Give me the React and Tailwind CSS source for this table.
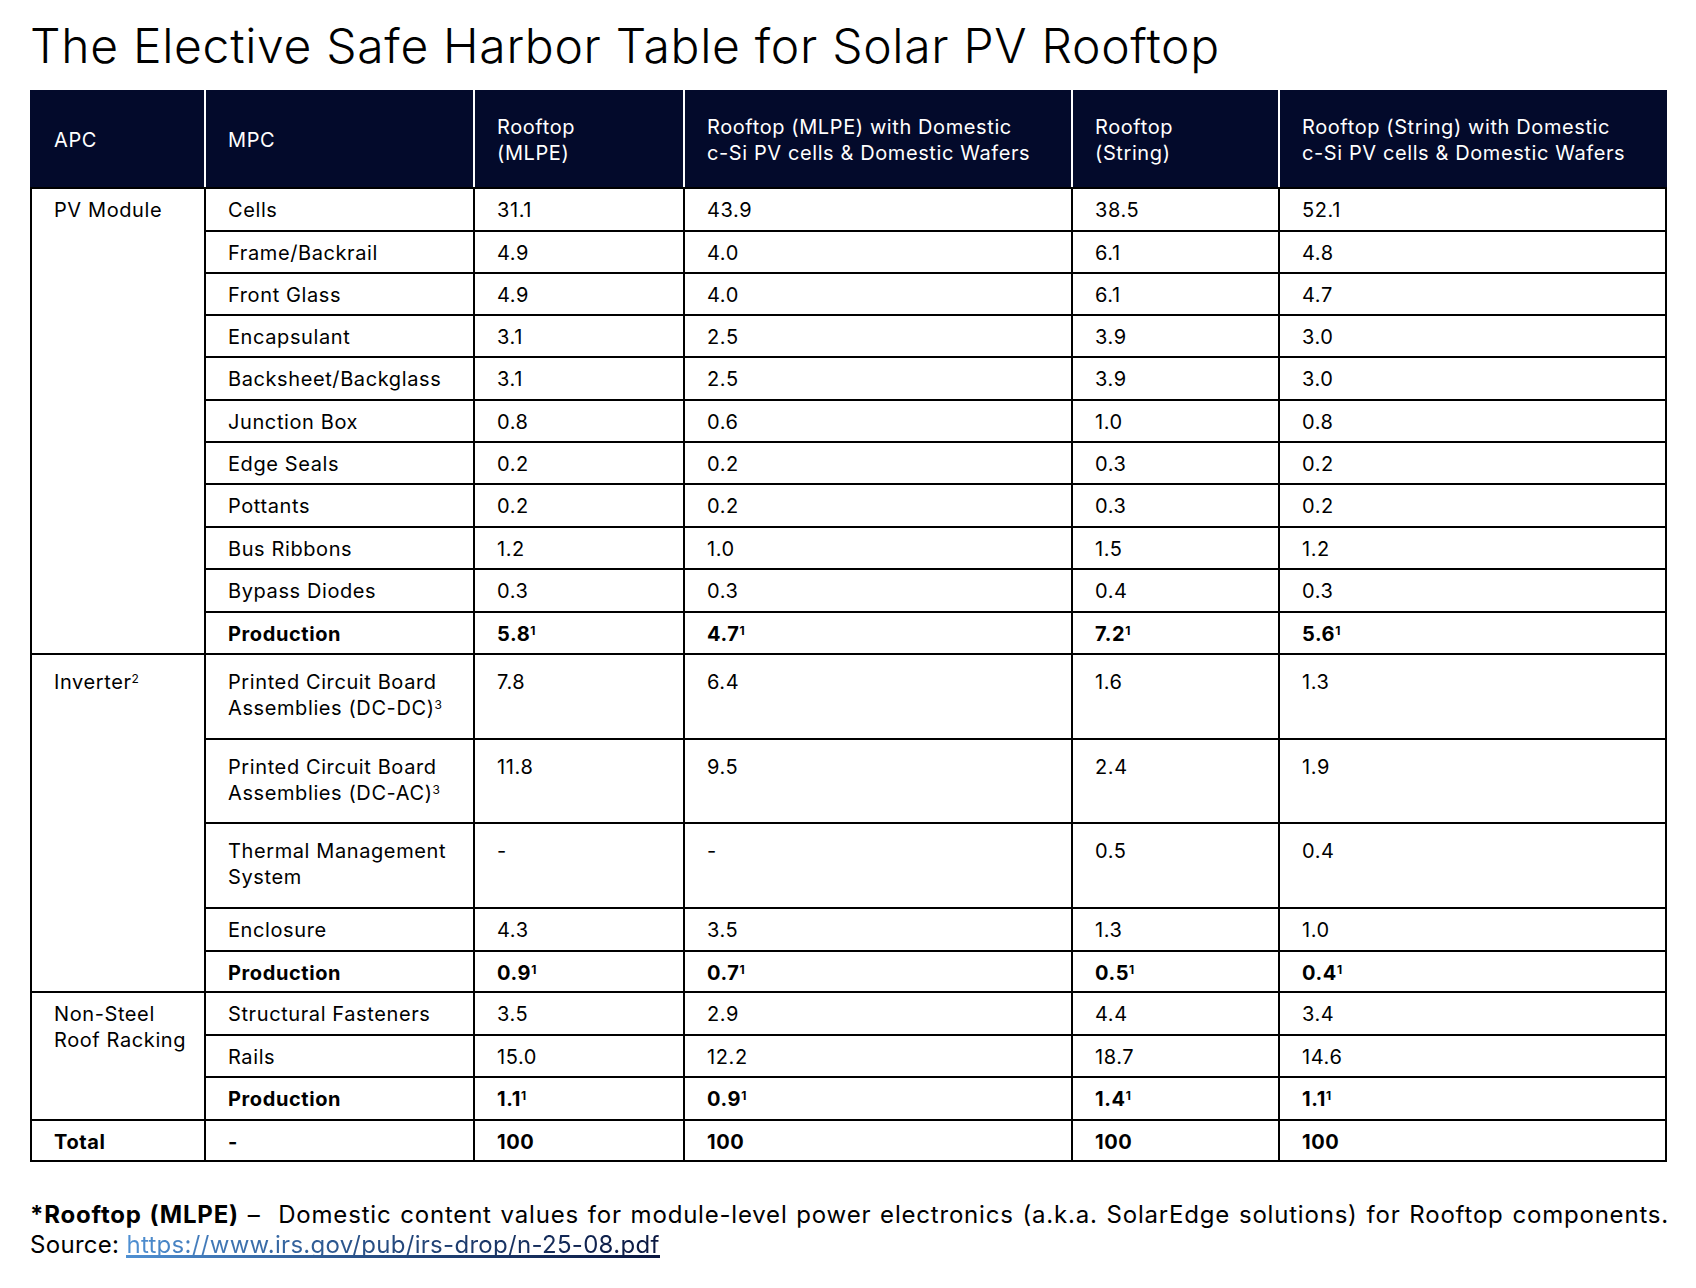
import React from "react";

const NAVY = "bg-[#030a2b]";

const pv = [
  ["Cells", "31.1", "43.9", "38.5", "52.1", "h-[43px]"],
  ["Frame/Backrail", "4.9", "4.0", "6.1", "4.8", "h-[42px]"],
  ["Front Glass", "4.9", "4.0", "6.1", "4.7", "h-[42px]"],
  ["Encapsulant", "3.1", "2.5", "3.9", "3.0", "h-[42px]"],
  ["Backsheet/Backglass", "3.1", "2.5", "3.9", "3.0", "h-[43px]"],
  ["Junction Box", "0.8", "0.6", "1.0", "0.8", "h-[42px]"],
  ["Edge Seals", "0.2", "0.2", "0.3", "0.2", "h-[42px]"],
  ["Pottants", "0.2", "0.2", "0.3", "0.2", "h-[43px]"],
  ["Bus Ribbons", "1.2", "1.0", "1.5", "1.2", "h-[42px]"],
  ["Bypass Diodes", "0.3", "0.3", "0.4", "0.3", "h-[43px]"],
];

const inv = [
  [["Printed Circuit Board", "Assemblies (DC-DC)", "3"], "7.8", "6.4", "1.6", "1.3", "h-[85px]"],
  [["Printed Circuit Board", "Assemblies (DC-AC)", "3"], "11.8", "9.5", "2.4", "1.9", "h-[84px]"],
  [["Thermal Management", "System", null], "-", "-", "0.5", "0.4", "h-[85px]"],
];

const cellBase = "border-2 border-black align-top pl-[22px] pr-2";

function Td({ children, multi, bold, rowSpan }) {
  return (
    <td
      rowSpan={rowSpan}
      className={`${cellBase} ${multi ? "pt-[14px]" : "pt-[8px]"} ${bold ? "font-bold" : "font-normal"}`}
    >
      {children}
    </td>
  );
}

function Sup({ n }) {
  return <sup className="text-[12px] tracking-normal">{n}</sup>;
}

function ProdRow({ vals, h }) {
  return (
    <tr className={h}>
      <Td bold>Production</Td>
      {vals.map((v, i) => (
        <Td key={i} bold>
          {v}
          <Sup n="1" />
        </Td>
      ))}
    </tr>
  );
}

const thBase = `${NAVY} border-2 border-b-black pl-[22px] text-left align-middle font-normal text-white`;

export default function App() {
  return (
    <div
      className="min-h-[1288px] w-[1696px] bg-white text-black"
      style={{ fontFamily: "Inter, 'Noto Sans', 'Liberation Sans', sans-serif" }}
    >
      <h1 className="pl-[30px] pt-[17px] text-[48px] leading-[58px] font-light tracking-[0.7px] text-black">
        The Elective Safe Harbor Table for Solar PV Rooftop
      </h1>

      <table className="ml-[30px] mt-[15px] w-[1635px] table-fixed border-collapse text-[20px] leading-[26px] tracking-[0.6px]">
        <colgroup>
          <col className="w-[174px]" />
          <col className="w-[269px]" />
          <col className="w-[210px]" />
          <col className="w-[388px]" />
          <col className="w-[207px]" />
          <col className="w-[387px]" />
        </colgroup>
        <thead>
          <tr className="h-[97px]">
            <th className={`${thBase} border-[#030a2b] border-r-white border-b-black`}>APC</th>
            <th className={`${thBase} border-white border-t-[#030a2b] border-b-black`}>MPC</th>
            <th className={`${thBase} border-white border-t-[#030a2b] border-b-black`}>
              Rooftop
              <br />
              (MLPE)
            </th>
            <th className={`${thBase} border-white border-t-[#030a2b] border-b-black`}>
              Rooftop (MLPE) with Domestic
              <br />
              c-Si PV cells &amp; Domestic Wafers
            </th>
            <th className={`${thBase} border-white border-t-[#030a2b] border-b-black`}>
              Rooftop
              <br />
              (String)
            </th>
            <th className={`${thBase} border-[#030a2b] border-l-white border-b-black`}>
              Rooftop (String) with Domestic
              <br />
              c-Si PV cells &amp; Domestic Wafers
            </th>
          </tr>
        </thead>
        <tbody>
          {pv.map((r, i) => (
            <tr key={r[0]} className={r[5]}>
              {i === 0 && <Td rowSpan={11}>PV Module</Td>}
              <Td>{r[0]}</Td>
              <Td>{r[1]}</Td>
              <Td>{r[2]}</Td>
              <Td>{r[3]}</Td>
              <Td>{r[4]}</Td>
            </tr>
          ))}
          <ProdRow vals={["5.8", "4.7", "7.2", "5.6"]} h="h-[42px]" />

          {inv.map((r, i) => (
            <tr key={i} className={r[5]}>
              {i === 0 && (
                <Td rowSpan={5} multi>
                  Inverter
                  <Sup n="2" />
                </Td>
              )}
              <Td multi>
                {r[0][0]}
                <br />
                {r[0][1]}
                {r[0][2] && <Sup n={r[0][2]} />}
              </Td>
              <Td multi>{r[1]}</Td>
              <Td multi>{r[2]}</Td>
              <Td multi>{r[3]}</Td>
              <Td multi>{r[4]}</Td>
            </tr>
          ))}
          <tr className="h-[43px]">
            <Td>Enclosure</Td>
            <Td>4.3</Td>
            <Td>3.5</Td>
            <Td>1.3</Td>
            <Td>1.0</Td>
          </tr>
          <ProdRow vals={["0.9", "0.7", "0.5", "0.4"]} h="h-[41px]" />

          <tr className="h-[43px]">
            <Td rowSpan={3}>
              Non-Steel
              <br />
              Roof Racking
            </Td>
            <Td>Structural Fasteners</Td>
            <Td>3.5</Td>
            <Td>2.9</Td>
            <Td>4.4</Td>
            <Td>3.4</Td>
          </tr>
          <tr className="h-[42px]">
            <Td>Rails</Td>
            <Td>15.0</Td>
            <Td>12.2</Td>
            <Td>18.7</Td>
            <Td>14.6</Td>
          </tr>
          <ProdRow vals={["1.1", "0.9", "1.4", "1.1"]} h="h-[43px]" />

          <tr className="h-[41px]">
            <Td bold>Total</Td>
            <Td bold>-</Td>
            <Td bold>100</Td>
            <Td bold>100</Td>
            <Td bold>100</Td>
            <Td bold>100</Td>
          </tr>
        </tbody>
      </table>

      <div className="mt-[38px] pl-[30px] text-[24px] leading-[30px] tracking-[0.3px] text-black">
        <p className="w-[1639px] whitespace-nowrap tracking-[0.8px] text-justify [text-align-last:justify]">
          <span className="font-bold">*Rooftop (MLPE)</span> –&nbsp; Domestic content values for
          module-level power electronics (a.k.a. SolarEdge solutions) for Rooftop components.
        </p>
        <p className="whitespace-nowrap">
          Source:{" "}
          <a
            href="#"
            className="relative inline-block bg-gradient-to-r from-[#4f90d3] via-[#24497e] to-[#0a1740] bg-clip-text text-transparent"
          >
            https://www.irs.gov/pub/irs-drop/n-25-08.pdf
            <span className="absolute bottom-[2px] left-0 h-[3px] w-full bg-gradient-to-r from-[#4f90d3] via-[#24497e] to-[#0a1740]" />
          </a>
        </p>
      </div>
    </div>
  );
}
